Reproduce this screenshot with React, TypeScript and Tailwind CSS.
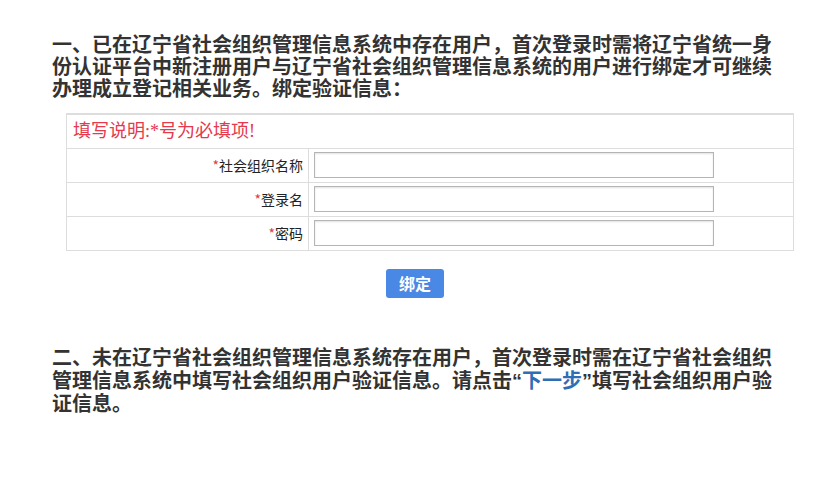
import type { ReactNode } from "react";

const heading = "font-['Liberation_Sans','Noto_Sans_CJK_SC',sans-serif]";

function Row({ label, children }: { label: string; children: ReactNode }) {
  return (
    <tr className="h-[34px] border-t border-[#dddddd]">
      <td className="w-[242px] border-r border-[#dddddd] pr-[5px] text-right text-[14px] text-[#222]">
        <span className="text-[#e4393c]">*</span>
        {label}
      </td>
      <td className="pl-[5px]">{children}</td>
    </tr>
  );
}

export default function App() {
  return (
    <div className="min-h-[504px] bg-white pl-[52px] pt-[34px] font-['Noto_Sans_CJK_SC',sans-serif]">
      {/* 已有用户：绑定 */}
      <h2 className={`w-[724px] text-[20px] font-bold leading-[22px] text-[#333] ${heading}`}>
        一、已在辽宁省社会组织管理信息系统中存在用户，首次登录时需将辽宁省统一身份认证平台中新注册用户与辽宁省社会组织管理信息系统的用户进行绑定才可继续办理成立登记相关业务。绑定验证信息：
      </h2>

      <table className="ml-[14px] mt-[13px] w-[728px] border-collapse border border-t-2 border-[#dddddd]">
        <tbody>
          <tr className="h-[34px]">
            <td colSpan={2} className="pl-[6px] font-['Liberation_Serif','Noto_Sans_CJK_SC',serif] text-[18px] leading-none text-[#e5394d]">
              填写说明:*号为必填项!
            </td>
          </tr>
          <Row label="社会组织名称">
            <input type="text" className="block h-[26px] w-[400px] border border-[#b5b5b5] bg-white shadow-[inset_0_1px_2px_rgba(0,0,0,0.12)] outline-none" />
          </Row>
          <Row label="登录名">
            <input type="text" className="block h-[26px] w-[400px] border border-[#b5b5b5] bg-white shadow-[inset_0_1px_2px_rgba(0,0,0,0.12)] outline-none" />
          </Row>
          <Row label="密码">
            <input type="password" className="block h-[26px] w-[400px] border border-[#b5b5b5] bg-white shadow-[inset_0_1px_2px_rgba(0,0,0,0.12)] outline-none" />
          </Row>
        </tbody>
      </table>

      <div className="ml-[334px] mt-[18px]">
        <button className="h-[29px] w-[58px] rounded-[3px] bg-[#4a88e6] text-[16px] font-bold text-white">
          绑定
        </button>
      </div>

      {/* 新用户：下一步 */}
      <h2 className={`mt-[49px] w-[724px] text-[20px] font-bold leading-[23px] text-[#333] ${heading}`}>
        二、未在辽宁省社会组织管理信息系统存在用户，首次登录时需在辽宁省社会组织管理信息系统中填写社会组织用户验证信息。请点击“<span className="text-[#2f6db5]">下一步</span>”填写社会组织用户验证信息。
      </h2>
    </div>
  );
}
